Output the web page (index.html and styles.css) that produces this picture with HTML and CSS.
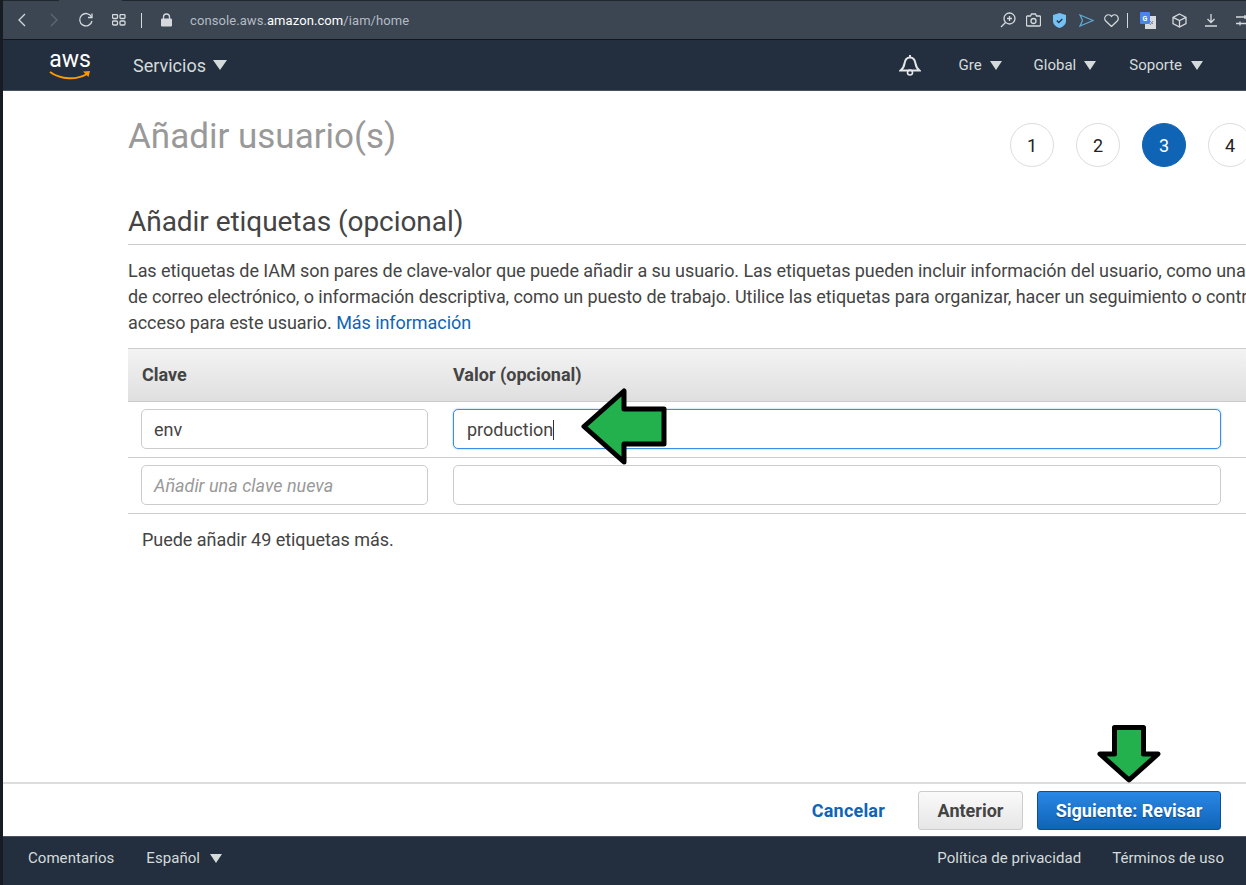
FILE: index.html
```html
<!DOCTYPE html>
<html lang="es">
<head>
    <meta charset="UTF-8">
    <title>Añadir usuario(s)</title>
    <link rel="stylesheet" href="styles.css">
</head>
<body>
    <div class="browser-bar">
        <svg class="ico" width="14" height="18" viewBox="0 0 14 18"><path d="M10 3 4 9l6 6" stroke="#d5d9dd"/></svg>
        <svg class="ico ico-fwd" width="14" height="18" viewBox="0 0 14 18"><path d="m4 3 6 6-6 6" stroke="#5d6873"/></svg>
        <svg class="ico ico-reload" width="16" height="16" viewBox="0 0 16 16"><path d="M13.500 5A6.200 6.200 0 1 0 14 9" stroke="#d5d9dd"/><path d="M14 1.500V5.500h-4" stroke="#d5d9dd"/></svg>
        <svg class="ico ico-grid" width="14" height="12" viewBox="0 0 14 12"><rect x=".5" y=".5" width="5" height="4" rx="1" stroke="#d5d9dd"/><rect x="8" y=".5" width="5" height="4" rx="1" stroke="#d5d9dd"/><rect x=".5" y="7" width="5" height="4" rx="1" stroke="#d5d9dd"/><rect x="8" y="7" width="5" height="4" rx="1" stroke="#d5d9dd"/></svg>
        <span class="bar-sep"></span>
        <svg class="ico-lock" width="11" height="14" viewBox="0 0 11 14"><path d="M2.500 6V4a3 3 0 0 1 6 0v2" fill="none" stroke="#d5d9dd" stroke-width="1.300"/><rect y="5.500" width="11" height="8" rx="1.200" fill="#d5d9dd"/></svg>
        <span class="url">console.aws.<b>amazon.com</b>/iam/home</span>
        <div class="bar-tools">
            <svg class="ico" width="16" height="16" viewBox="0 0 16 16"><circle cx="9.500" cy="6.500" r="5.500" stroke="#d5d9dd"/><path d="M1 15l4.500-4.500M7 6.500h5M9.500 4v5" stroke="#d5d9dd"/></svg>
            <svg class="ico" width="15" height="14" viewBox="0 0 15 14"><path d="M1.500 3h3l1-2h4l1 2h3a1 1 0 0 1 1 .500v9l-1 .500h-12l-1-.500v-9z" stroke="#d5d9dd"/><circle cx="7.500" cy="8" r="2.500" stroke="#d5d9dd"/></svg>
            <svg class="tool-shield" width="13" height="15" viewBox="0 0 13 15"><path d="M6.500 0 13 2v6c0 3.500-3 5.800-6.500 7C3 13.800 0 11.500 0 8V2z" fill="#74c1f5"/><path d="m3.800 7.500 2 2 3.500-3.500" fill="none" stroke="#2b3a4a" stroke-width="1.500"/></svg>
            <svg class="ico tool-send" width="15" height="13" viewBox="0 0 15 13"><path d="M1 1l13 5.500L1 12l2.500-5.500z" stroke="#5fa9d3"/></svg>
            <svg class="ico" width="15" height="13" viewBox="0 0 15 13"><path d="M7.500 12.500 1.800 7A3.600 3.600 0 0 1 7 1.900l.5.600.5-.6A3.600 3.600 0 0 1 13.200 7z" stroke="#d5d9dd"/></svg>
            <span class="bar-sep bar-sep-tools"></span>
            <svg class="tool-translate" width="16" height="17" viewBox="0 0 16 17"><rect x="5" y="4" width="11" height="13" fill="#d8dadd"/><path d="M10 9l3 3M13 9l-3 4" stroke="#7d8791"/><rect width="10" height="12" rx="1" fill="#4a86e8"/><text x="2.500" y="8.500" class="translate-g">G</text></svg>
            <svg class="ico ico-box" width="15" height="15" viewBox="0 0 15 15"><path d="M7.500 1 14 4.300v6.400L7.500 14 1 10.700V4.300zM1 4.300l6.500 3.200L14 4.300M7.500 7.500V14" stroke="#d5d9dd"/></svg>
            <svg class="ico ico-dl" width="14" height="14" viewBox="0 0 14 14"><path d="M7 1v8.500M3.500 6 7 9.500 10.500 6M1 13h12" stroke="#d5d9dd"/></svg>
            <svg class="ico ico-sliders" width="14" height="13" viewBox="0 0 14 13"><path d="M0 3h14M0 9.500h14" stroke="#d5d9dd"/><path d="M9 1v4M4 7.500v4" stroke="#d5d9dd"/></svg>
        </div>
    </div>

    <nav class="aws-nav">
        <div class="aws-logo">
            <span class="aws-word">aws</span>
            <svg width="42" height="11" viewBox="0 0 42 11"><path d="M1 2c11 8 27 8 37 2" fill="none" stroke="#f90" stroke-width="2"/><path d="M34 1.500 41 1 39.500 7z" fill="#f90"/></svg>
        </div>
        <span class="nav-services">Servicios <i class="caret caret-big"></i></span>
        <svg class="nav-bell" width="22" height="22" viewBox="0 0 22 22"><path d="M1.500 16.500c2.500-2 3.500-3.500 4-7 .5-3.500 2.500-6 5.500-6s5 2.500 5.500 6c.5 3.500 1.500 5 4 7z" fill="none" stroke="#e4e6e8" stroke-width="2"/><path d="M11 1v2.500" stroke="#e4e6e8" stroke-width="2"/><circle cx="11" cy="18.500" r="2.500" fill="none" stroke="#e4e6e8" stroke-width="1.600"/></svg>
        <span class="nav-item nav-gre">Gre <i class="caret"></i></span>
        <span class="nav-item nav-global">Global <i class="caret"></i></span>
        <span class="nav-item nav-support">Soporte <i class="caret"></i></span>
    </nav>

    <main class="content">
        <div class="head-row">
            <h1>Añadir usuario(s)</h1>
            <ol class="steps">
                <li>1</li>
                <li>2</li>
                <li class="active">3</li>
                <li>4</li>
            </ol>
        </div>
        <h2>Añadir etiquetas (opcional)</h2>
        <p class="intro">Las etiquetas de IAM son pares de clave-valor que puede añadir a su usuario. Las etiquetas pueden incluir información del usuario, como una<br>de correo electrónico, o información descriptiva, como un puesto de trabajo. Utilice las etiquetas para organizar, hacer un seguimiento o contr<br>acceso para este usuario. <a href="#">Más información</a></p>

        <div class="tags">
            <div class="tags-row tags-head">
                <span class="col-key">Clave</span>
                <span class="col-val">Valor (opcional)</span>
            </div>
            <div class="tags-row">
                <div class="col-key"><div class="field">env</div></div>
                <div class="col-val"><div class="field field-focus">production<span class="cursor"></span></div></div>
            </div>
            <div class="tags-row">
                <div class="col-key"><div class="field field-ph">Añadir una clave nueva</div></div>
                <div class="col-val"><div class="field"></div></div>
            </div>
            <p class="tags-left">Puede añadir 49 etiquetas más.</p>
        </div>
    </main>

    <div class="actions">
        <a class="link-cancel" href="#">Cancelar</a>
        <button class="btn">Anterior</button>
        <button class="btn btn-primary">Siguiente: Revisar</button>
    </div>

    <footer class="foot">
        <span>Comentarios</span>
        <span class="foot-lang">Español <i class="caret"></i></span>
        <span class="foot-privacy">Política de privacidad</span>
        <span class="foot-terms">Términos de uso</span>
    </footer>

    <!-- arrows drawn on top of the screenshot -->
    <svg class="arrow arrow-left" width="88" height="78" viewBox="0 0 88 78"><path d="M4 38.500 44 3v18h40v35H44v18z" fill="#23b14d" stroke="#000" stroke-width="5" stroke-linejoin="round"/></svg>
    <svg class="arrow arrow-down" width="72" height="62" viewBox="0 0 72 62"><path d="M36 57 7 31h14.500V4.500h29V31H65z" fill="#23b14d" stroke="#000" stroke-width="5" stroke-linejoin="round"/></svg>
</body>
</html>
```

FILE: styles.css
```css
*{
    padding: 0;
    margin: 0;
    box-sizing: border-box;
}
body{
    width: 1246px;
    height: 885px;
    overflow: hidden;
    position: relative;
    background: #fff;
    border-left: 3px solid #171b22;
    font-family: Roboto, "Liberation Sans", sans-serif;
    color: #444;
    display: flex;
    flex-direction: column;
}
.browser-bar{
    height: 40px;
    flex: none;
    display: flex;
    align-items: center;
    position: relative;
    background: #3b4652;
    border-top: 1px solid #20262e;
    border-bottom: 1px solid #14181e;
    padding-left: 12px;
}
/* active tab joins the toolbar */
.browser-bar::before{
    content: "";
    position: absolute;
    left: 56px;
    top: -1px;
    width: 63px;
    height: 1px;
    background: #3b4652;
}
.ico{
    fill: none;
    stroke-width: 1.300;
    flex: none;
}
.ico-fwd{
    margin-left: 18px;
}
.ico-reload{
    margin-left: 17px;
}
.ico-grid{
    margin-left: 18px;
}
.bar-sep{
    width: 1px;
    height: 15px;
    background: #d5d9dd;
    margin-left: 15px;
}
.ico-lock{
    margin-left: 19px;
    flex: none;
}
.url{
    margin-left: 18px;
    font-size: 13px;
    letter-spacing: .08px;
    color: #b4bbc2;
    white-space: nowrap;
}
.url b{
    font-weight: 400;
    color: #fff;
}
.bar-tools{
    margin-left: auto;
    display: flex;
    align-items: center;
    gap: 10px;
    width: 246px;
    flex: none;
    overflow: hidden;
}
.tool-shield{
    margin-left: 2px;
    flex: none;
}
.tool-send{
    margin-left: 3px;
}
.bar-sep-tools{
    margin-left: -2px;
    flex: none;
}
.tool-translate{
    margin-left: 2px;
    flex: none;
}
.translate-g{
    font-size: 7px;
    font-weight: 700;
    fill: #fff;
}
.ico-box{
    margin-left: 6px;
}
.ico-dl{
    margin-left: 7px;
}
.ico-sliders{
    margin-left: 8px;
}
.aws-nav{
    height: 51px;
    flex: none;
    display: flex;
    align-items: center;
    background: #232f3e;
    border-bottom: 1px solid #4a5461;
    color: #d5dbdb;
    font-size: 15px;
    white-space: nowrap;
}
.aws-logo{
    margin-left: 46px;
    width: 42px;
    display: flex;
    flex-direction: column;
    align-items: center;
    color: #fff;
}
.aws-word{
    font-size: 23px;
    line-height: 19px;
    height: 19px;
}
.aws-logo svg{
    margin-top: 1px;
}
.nav-services{
    margin-left: 42px;
    font-size: 18px;
    display: flex;
    align-items: center;
    gap: 7px;
}
.caret{
    display: inline-block;
    width: 0;
    height: 0;
    border-left: 6px solid transparent;
    border-right: 6px solid transparent;
    border-top: 9px solid #d5dbdb;
}
.caret-big{
    border-left-width: 7px;
    border-right-width: 7px;
    border-top-width: 10px;
}
.nav-bell{
    margin-left: auto;
    flex: none;
}
.nav-item{
    display: flex;
    align-items: center;
    gap: 8px;
}
.nav-gre{
    margin-left: 37px;
}
.nav-global{
    margin-left: 32px;
}
.nav-support{
    margin-left: 33px;
    margin-right: 43px;
    gap: 9px;
}
.content{
    flex: 1;
    min-height: 0;
    padding-left: 125px;
    width: 1360px;
}
.head-row{
    height: 117px;
    display: flex;
    align-items: flex-start;
}
h1{
    width: 882px;
    flex: none;
    font-size: 35px;
    font-weight: 400;
    line-height: 40px;
    margin-top: 26px;
    color: #999;
}
.steps{
    list-style: none;
    display: flex;
    gap: 22px;
    margin-top: 32px;
}
.steps li{
    width: 44px;
    height: 44px;
    border-radius: 50%;
    border: 1px solid #ddd;
    display: flex;
    align-items: center;
    justify-content: center;
    font-size: 18px;
    color: #222;
}
.steps .active{
    background: #0f64b6;
    border-color: #0f64b6;
    color: #fff;
}
h2{
    font-size: 28px;
    font-weight: 400;
    line-height: 28px;
    letter-spacing: -.05px;
    height: 37px;
    border-bottom: 1px solid #ccc;
    color: #444;
}
.intro{
    margin-top: 13px;
    font-size: 18px;
    line-height: 26px;
    letter-spacing: -.06px;
    white-space: nowrap;
}
.intro a{
    color: #0f64b6;
    text-decoration: none;
}
.tags{
    margin-top: 12px;
}
.tags-row{
    display: flex;
    height: 56px;
    align-items: center;
    border-bottom: 1px solid #ccc;
    padding-bottom: 2px;
}
.tags-head{
    height: 54px;
    border-top: 1px solid #ccc;
    background: linear-gradient(#f3f3f3, #dfdfdf);
    font-size: 18px;
    font-weight: 700;
    color: #444;
}
.col-key{
    width: 325px;
    padding-left: 13px;
    padding-right: 25px;
    flex: none;
}
.tags-head .col-key{
    padding-left: 14px;
}
.col-val{
    width: 768px;
    flex: none;
}
.field{
    height: 40px;
    line-height: 40px;
    border: 1px solid #ccc;
    border-radius: 5px;
    background: #fff;
    padding-left: 12px;
    font-size: 18px;
    color: #444;
}
.field-focus{
    border-color: #3a8ee6;
    box-shadow: 0 0 2px #7ab6f0;
    padding-left: 13px;
}
.field-ph{
    color: #999;
    font-style: italic;
}
.cursor{
    display: inline-block;
    width: 1px;
    height: 20px;
    background: #333;
    vertical-align: -4px;
}
.tags-left{
    padding: 16px 0 0 14px;
    font-size: 18px;
    line-height: 20px;
    letter-spacing: -.04px;
}
.actions{
    height: 54px;
    flex: none;
    display: flex;
    align-items: center;
    border-top: 2px solid #ddd;
    padding-right: 25px;
    padding-top: 1px;
}
.link-cancel{
    margin-left: auto;
    font-size: 18px;
    font-weight: 700;
    letter-spacing: .2px;
    color: #0f64b6;
    text-decoration: none;
}
.btn{
    font-family: inherit;
    height: 39px;
    margin-left: 33px;
    width: 105px;
    border: 1px solid #ccc;
    border-radius: 3px;
    background: linear-gradient(#fafafa, #e6e6e6);
    font-size: 18px;
    font-weight: 700;
    color: #444;
}
.btn-primary{
    margin-left: 14px;
    width: 184px;
    border-color: #0f4f8f;
    background: linear-gradient(#2a87e6, #0f64b6);
    color: #fff;
    text-shadow: 0 1px 1px #0b4a87;
}
.foot{
    height: 49px;
    flex: none;
    display: flex;
    align-items: center;
    background: #232f3e;
    border-top: 1px solid #4a5461;
    color: #d5dbdb;
    font-size: 15px;
    letter-spacing: .05px;
    padding: 0 22px 6px 25px;
    white-space: nowrap;
}
.foot-lang{
    margin-left: 32px;
    display: flex;
    align-items: center;
    gap: 10px;
}
.foot-privacy{
    margin-left: auto;
}
.foot-terms{
    margin-left: 31px;
}
.arrow{
    position: absolute;
}
.arrow-left{
    left: 577px;
    top: 388px;
}
.arrow-down{
    left: 1090px;
    top: 723px;
}
```
